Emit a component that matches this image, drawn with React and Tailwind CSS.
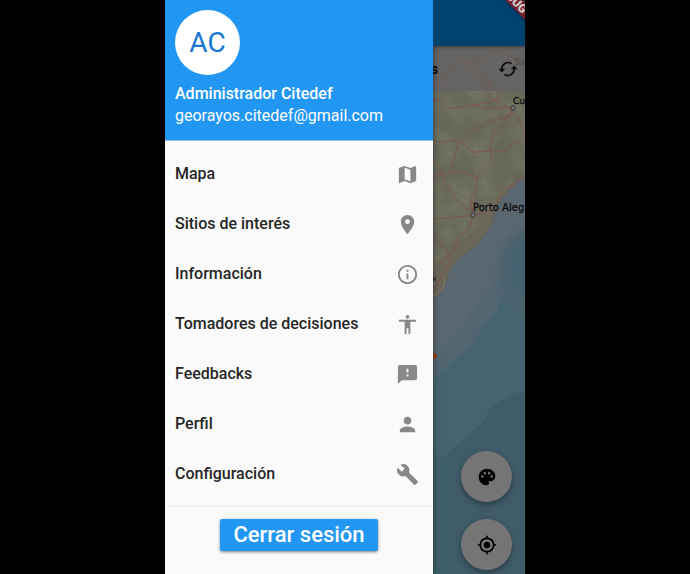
import React from "react";
import {
  MdMap, MdPlace, MdInfoOutline, MdAccessibility, MdFeedback,
  MdPerson, MdBuild, MdPalette, MdMyLocation,
} from "react-icons/md";

const items = [
  { label: "Mapa", Icon: MdMap },
  { label: "Sitios de interés", Icon: MdPlace },
  { label: "Información", Icon: MdInfoOutline },
  { label: "Tomadores de decisiones", Icon: MdAccessibility },
  { label: "Feedbacks", Icon: MdFeedback },
  { label: "Perfil", Icon: MdPerson },
  { label: "Configuración", Icon: MdBuild },
];

function CoastMap() {
  return (
    <svg className="absolute inset-0 h-full w-full" viewBox="0 0 92 574" preserveAspectRatio="xMinYMin slice" aria-hidden="true">
      <defs>
        <filter id="relief" x="0" y="0" width="100%" height="100%">
          <feTurbulence type="fractalNoise" baseFrequency="0.05" numOctaves="4" seed="4" />
          <feColorMatrix values="0 0 0 0 0.33  0 0 0 0 0.38  0 0 0 0 0.24  1.8 0 0 0 -0.6" />
        </filter>
        <filter id="soft"><feGaussianBlur stdDeviation="3" /></filter>
        <clipPath id="land">
          <path d="M0 0H92V177C84 181 78 188 72 195C66 202 63 208 61 216C58 228 50 239 41 247C30 256 19 262 16 273C13 284 9 294 0 298Z" />
        </clipPath>
      </defs>
      <rect width="92" height="574" fill="#46646f" />
      <g transform="translate(-8 280) scale(.33333)">
        <path d="M24 -420H315V-20Q225 50 215 95L160 160L135 205L80 245L24 300Z" fill="#526671" />
        <path d="M24 -420H315V-110L250 -60L225 0L190 25L160 70L115 130L75 180L24 215Z" fill="#5b6770" />
        <path d="M315 325L275 340L230 360L195 385L180 420L140 455L95 495L65 525L24 535V882H315Z" fill="#405c69" />
        <path d="M24 520Q90 560 80 700T75 882H24Z" fill="#3d5f6a" />
      </g>
      <ellipse cx="98" cy="272" rx="35" ry="44" fill="#4c636e" filter="url(#soft)" />
      <ellipse cx="100" cy="268" rx="22" ry="32" fill="#436270" filter="url(#soft)" />
      <g clipPath="url(#land)">
        <rect width="92" height="300" fill="#686859" />
        <rect width="92" height="300" filter="url(#relief)" opacity=".25" />
        <path d="M92 172Q74 186 64 204T42 230T15 252T0 275V310H92Z" fill="#6a6659" />
      </g>
      <path d="M92 177C84 181 78 188 72 195C66 202 63 208 61 216C58 228 50 239 41 247C30 256 19 262 16 273C13 284 9 294 0 298" fill="none" stroke="#59594f" strokeWidth=".6" />
      <g transform="translate(-8 90) scale(.33333)" fill="none" stroke="#7f544e" strokeWidth="3">
        <path d="M24 30Q50 28 62 45T100 52L150 45L185 54H260M150 45L215 30L225 0M180 0L205 28L235 45L262 55" />
        <path d="M262 60L255 80L205 90L150 120L120 145L98 168L80 230L76 245M262 60L230 105L205 125L195 180L200 210L160 255L148 310L135 330L145 370" />
        <path d="M24 150L50 158L80 150L110 160L145 187L210 180L240 185L265 160L300 150M262 60L285 95L300 130" />
        <path d="M24 260L75 245L125 247L155 265M24 213L45 235L60 275L100 335L145 370M24 388L145 375L205 360L235 300L300 262" />
        <path d="M145 375L130 420L98 445L90 475L72 493L24 535M24 432L72 493L75 520L50 560L24 600" />
      </g>
      <path d="M0 296Q12 290 12 280" fill="none" stroke="#85806b" strokeWidth="1" />
      <g fill="#77777a" stroke="#35353a" strokeWidth="1">
        <rect x="78" y="106" width="4" height="4" rx="1" />
        <rect x="38" y="213" width="4" height="4" rx="1" />
      </g>
      <circle cx="1" cy="279" r="2" fill="#3b3d37" />
      <circle cx="1" cy="356" r="3" fill="#8d3f19" />
      <g fontFamily="'DejaVu Sans', sans-serif" fontSize="9" fill="#0c0c0c" stroke="#0c0c0c" strokeWidth=".3">
        <text x="80" y="104">Cu</text>
        <text x="40" y="211" fontSize="10">Porto Aleg</text>
      </g>
    </svg>
  );
}

function PanelRoads() {
  return (
    <svg className="absolute inset-0 h-full w-full" viewBox="0 46 92 45" preserveAspectRatio="xMinYMin slice" fill="none" stroke="#6f5753" strokeWidth=".9" aria-hidden="true">
      <path d="M0 86L9 81L17 69L27 62L36 64L48 60L60 53L68 48M36 64L41 73L51 82L60 91M68 48L68 53L80 58L92 61M60 91L54 80L43 68" />
    </svg>
  );
}

function SyncIcon() {
  return (
    <svg className="size-5" viewBox="0 0 20 20" fill="none" stroke="#0b0b0b" strokeWidth="1.6" aria-hidden="true">
      <path d="M3.8 10.5A6.4 6.4 0 0 1 13.6 4.6M16.2 9.5A6.4 6.4 0 0 1 6.4 15.4" />
      <path d="M.6 9.8H7L3.8 13.6ZM13 10.2H19.4L16.2 6.4Z" fill="#0b0b0b" stroke="none" />
    </svg>
  );
}

export default function App() {
  return (
    <div className="flex min-h-screen justify-center bg-black font-['Roboto',sans-serif]">
      <div className="flex w-full max-w-[360px] overflow-hidden">
        <aside className="z-10 flex w-[268px] shrink-0 flex-col bg-[#fafafa] shadow-[0_0_6px_rgba(0,0,0,0.5)]">
          <header className="border-b border-[#90c4f3] bg-[#2196f3] px-2.5 pt-2.5 pb-[13px] text-base text-white">
            <div className="flex size-[65px] items-center justify-center rounded-full bg-white text-[28px] text-[#1976d2]">AC</div>
            <p className="mt-2 leading-[22px] font-medium">Administrador Citedef</p>
            <p className="leading-[22px]">georayos.citedef@gmail.com</p>
          </header>
          <nav className="border-b border-[#eeeeee] pt-2 pb-[7px]">
            {items.map(({ label, Icon }) => (
              <a key={label} href="#" className="flex h-[50px] items-center justify-between pr-3.5 pl-2.5 text-base font-medium text-[#262626]">
                {label}
                <Icon className="size-[23px] text-[#888888]" aria-hidden="true" />
              </a>
            ))}
          </nav>
          <button type="button" className="mt-3 h-8 w-[158px] self-center rounded-xs bg-[#2196f3] text-[22px] leading-8 font-medium text-white shadow-[0_1px_3px_rgba(0,0,0,0.5)]">
            Cerrar sesión
          </button>
        </aside>
        <main className="relative flex min-w-0 flex-1 flex-col overflow-hidden">
          <CoastMap />
          <div className="relative z-10 h-[46px] shrink-0 overflow-hidden bg-[#01426f] shadow-[0_1px_3px_rgba(0,0,0,0.4)]">
            <div className="absolute -top-[7px] -right-7 flex h-3 w-20 rotate-45 items-center justify-center bg-[#7d1f2c] pr-1 text-xs font-black text-[#cfcfcf] shadow-[0_0_4px_rgba(0,0,0,0.5)]">
              DEBUG
            </div>
          </div>
          <div className="relative flex h-[45px] shrink-0 items-center justify-between bg-[#666462] pr-[7px]">
            <PanelRoads />
            <span className="relative -ml-0.5 text-sm font-bold text-[#0b0b0b]">s</span>
            <button type="button" aria-label="Actualizar" className="relative"><SyncIcon /></button>
            <span className="absolute top-2.5 right-0 text-[9px] text-[#4e4c4b]">Sa</span>
          </div>
          <div className="relative mt-auto flex flex-col items-end gap-[17px] pr-[13px] pb-1">
            <button type="button" aria-label="Colores" className="flex size-[51px] items-center justify-center rounded-full bg-[#757575] text-black shadow-[0_3px_6px_rgba(0,0,0,0.35)]">
              <MdPalette className="size-5" />
            </button>
            <button type="button" aria-label="Mi ubicación" className="flex size-[51px] items-center justify-center rounded-full bg-[#757575] text-black shadow-[0_3px_6px_rgba(0,0,0,0.35)]">
              <MdMyLocation className="size-5" />
            </button>
          </div>
        </main>
      </div>
    </div>
  );
}
